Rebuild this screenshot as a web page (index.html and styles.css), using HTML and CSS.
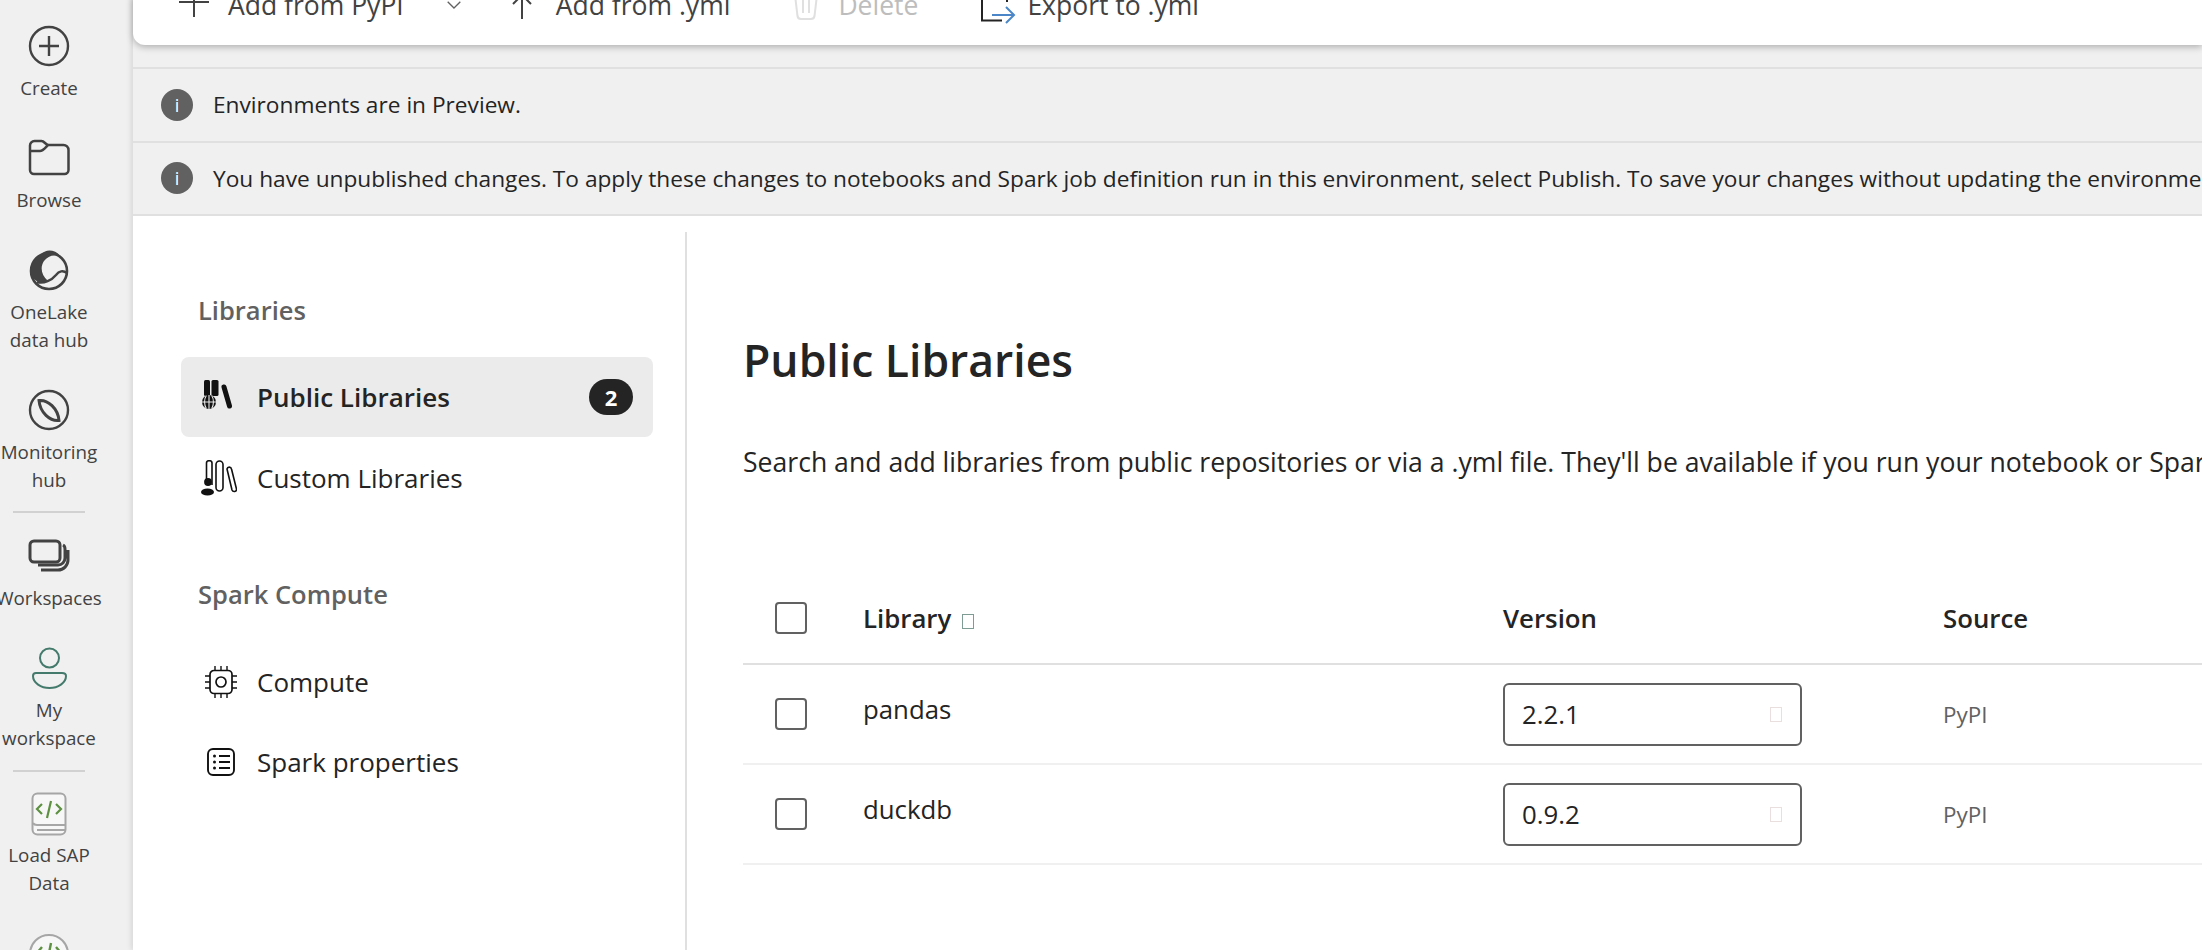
FILE: index.html
```html
<!DOCTYPE html>
<html lang="en">
<head>
<meta charset="utf-8">
<title>Environment - Public Libraries</title>
<link rel="stylesheet" href="styles.css">
</head>
<body>
<div class="app">
  <nav class="rail">
    <div class="rail-item">
      <svg class="rail-icon" viewBox="0 0 42 42"><circle cx="21" cy="21" r="19" fill="none" stroke="#424242" stroke-width="2.4"/><path d="M21 11v20M11 21h20" stroke="#424242" stroke-width="2.4" fill="none"/></svg>
      <span>Create</span>
    </div>
    <div class="rail-item">
      <svg class="rail-icon" viewBox="0 0 42 42"><path d="M2 8.500a4.500 4.500 0 0 1 4.500-4.500h7c3 0 4 4 7 4h15a5 5 0 0 1 5 5v20a4 4 0 0 1-4 4H6a4 4 0 0 1-4-4z M2 14h10c3 0 5-3 8-6" fill="none" stroke="#424242" stroke-width="2.500"/></svg>
      <span>Browse</span>
    </div>
    <div class="rail-item">
      <svg class="rail-icon" viewBox="0 0 42 42"><circle cx="21" cy="22" r="18" fill="none" stroke="#424242" stroke-width="2.600"/><path d="M14 5C17 0 28 0 33 8 26 5 20 7 16 12 12 18 13 26 20 32 10 36 3 30 3 22 3 14 8 8 14 5z" fill="#424242"/><path d="M9 33c7 2 15-2 19-7 3-4 7-5 11-2" fill="none" stroke="#424242" stroke-width="2.400"/></svg>
      <span>OneLake<br>data hub</span>
    </div>
    <div class="rail-item">
      <svg class="rail-icon" viewBox="0 0 42 42"><circle cx="21" cy="21" r="19" fill="none" stroke="#424242" stroke-width="2.400"/><path d="M11 11.500c9-1 19 8 20 20-9 1-19-8-20-20z" fill="none" stroke="#424242" stroke-width="3"/></svg>
      <span>Monitoring<br>hub</span>
    </div>
    <div class="rail-sep rail-sep-a"></div>
    <div class="rail-item rail-spaces">
      <svg class="rail-icon rail-icon-wide" viewBox="0 0 42 34"><rect x="2" y="2" width="30" height="21" rx="4" fill="none" stroke="#424242" stroke-width="3"/><path d="M35 6c2 1 2 2 2 4v9a7 7 0 0 1-7 7H10M40 11v10a10 10 0 0 1-10 10H13" fill="none" stroke="#424242" stroke-width="3"/></svg>
      <span>Workspaces</span>
    </div>
    <div class="rail-item">
      <svg class="rail-icon" viewBox="0 0 42 42"><circle cx="21.500" cy="11" r="9.500" fill="none" stroke="#447a6b" stroke-width="2"/><path d="M8 26h26c3 0 4 1 4 3 0 7-8 12-16.500 12S5 36 5 29c0-2 1-3 3-3z" fill="none" stroke="#447a6b" stroke-width="2"/></svg>
      <span>My<br>workspace</span>
    </div>
    <div class="rail-sep rail-sep-b"></div>
    <div class="rail-item rail-sap">
      <svg class="rail-icon rail-icon-book" viewBox="0 0 36 44"><rect x="1.500" y="1.500" width="33" height="41" rx="5" fill="#f7f7f7" stroke="#a6a6a6" stroke-width="2"/><path d="M2 31c1 2 2 2 4 2h28M6 38h28" fill="none" stroke="#a6a6a6" stroke-width="2"/><path d="M11 12l-5 5 5 5M25 12l5 5-5 5M20 9l-4 17" fill="none" stroke="#5d9141" stroke-width="2.200"/></svg>
      <span>Load SAP<br>Data</span>
    </div>
    <svg class="rail-icon rail-last" viewBox="0 0 42 42"><circle cx="21" cy="21" r="19" fill="#f7f7f7" stroke="#a6a6a6" stroke-width="2"/><path d="M14 14l-5 6 5 6M28 14l5 6-5 6M23 10l-4 20" fill="none" stroke="#5d9141" stroke-width="2.400"/></svg>
  </nav>

  <main class="content">
    <div class="toolbar">
      <svg class="tool-icon ti-add" viewBox="0 0 30 32"><path d="M15 0v28M0 13h30" stroke="#424242" stroke-width="2" fill="none"/></svg>
      <span class="tool-text tt-add">Add from PyPI</span>
      <svg class="tool-chevron" viewBox="0 0 14 8"><path d="M.7.7L7 7 13.300.7" stroke="#616161" stroke-width="1.300" fill="none"/></svg>
      <svg class="tool-icon ti-yml" viewBox="0 0 32 32"><path d="M16 30V6M7 15l9-9 9 9" stroke="#424242" stroke-width="2" fill="none"/></svg>
      <span class="tool-text tt-yml">Add from .yml</span>
      <svg class="tool-icon ti-del" viewBox="0 0 24 32"><path d="M1 6l2.500 21c.3 2 1.500 3 3.500 3h10c2 0 3.200-1 3.500-3L23 6M9 8v16M15 8v16" stroke="#e0e0e0" stroke-width="2" fill="none"/></svg>
      <span class="tool-text tool-text-off tt-del">Delete</span>
      <svg class="tool-icon ti-exp" viewBox="0 0 34 32"><path d="M2 0v31.500h20M27 0v13" stroke="#242424" stroke-width="2" fill="none"/><path d="M12 26h21M26 18l8 8-8 8" stroke="#4a86c8" stroke-width="2" fill="none"/></svg>
      <span class="tool-text tt-exp">Export to .yml</span>
    </div>

    <section class="panel">
      <div class="banner">
        <span class="info">i</span>
        <span>Environments are in Preview.</span>
      </div>
      <div class="banner">
        <span class="info">i</span>
        <span>You have unpublished changes. To apply these changes to notebooks and Spark job definition run in this environment, select Publish. To save your changes without updating the environment, select Save.</span>
      </div>

      <div class="split">
        <aside class="side">
          <h3 class="side-title">Libraries</h3>
          <div class="side-item side-item-active">
            <svg class="side-icon" viewBox="0 0 36 36"><rect x="3" y="1" width="6" height="16" rx="1.500" fill="#111"/><rect x="10.500" y="1" width="7" height="16" rx="1.500" fill="#111"/><path d="M23 8l5.500 19" stroke="#111" stroke-width="5" stroke-linecap="round"/><circle cx="8" cy="23" r="7" fill="#111"/><path d="M1 23h14M8 16v14M5.300 16.500c-2.300 3.500-2.300 9.500 0 13M10.700 16.500c2.300 3.500 2.300 9.500 0 13" fill="none" stroke="#ebebeb" stroke-width="1.100"/></svg>
            <span class="side-label">Public Libraries</span>
            <span class="count">2</span>
          </div>
          <div class="side-item side-item-next">
            <svg class="side-icon" viewBox="0 0 36 36"><path d="M5.500 20V3c0-3 5.500-3 5.500 0v22" fill="none" stroke="#111" stroke-width="1.600"/><rect x="15" y="1" width="7" height="30" rx="3.500" fill="none" stroke="#111" stroke-width="1.600"/><path d="M26 9c.5-2.500 4-2.500 4.500 0l5 20c.4 2.800-3.500 3.500-4.500 1z" fill="none" stroke="#111" stroke-width="1.600"/><circle cx="7" cy="22" r="3.900" fill="#111"/><ellipse cx="6.500" cy="32" rx="6.500" ry="3.600" fill="#111"/></svg>
            <span class="side-label">Custom Libraries</span>
          </div>
          <h3 class="side-title side-title-spark">Spark Compute</h3>
          <div class="side-item">
            <svg class="side-icon" viewBox="0 0 36 36"><rect x="9" y="6.500" width="22" height="23" rx="4" fill="none" stroke="#111" stroke-width="1.700"/><circle cx="20" cy="18" r="5" fill="none" stroke="#111" stroke-width="1.700"/><path d="M14 2v4M20 2v4M26 2v4M14 30v4M20 30v4M26 30v4M4 12h5M4 18h5M4 24h5M31 12h5M31 18h5M31 24h5" stroke="#111" stroke-width="1.400"/></svg>
            <span class="side-label">Compute</span>
          </div>
          <div class="side-item">
            <svg class="side-icon" viewBox="0 0 36 36"><rect x="7" y="5" width="26" height="26" rx="5" fill="none" stroke="#111" stroke-width="1.900"/><path d="M18 12h11M18 18h11M18 24h11" stroke="#111" stroke-width="1.900"/><circle cx="13.500" cy="12" r="1.500" fill="#111"/><circle cx="13.500" cy="18" r="1.500" fill="#111"/><circle cx="13.500" cy="24" r="1.500" fill="#111"/></svg>
            <span class="side-label">Spark properties</span>
          </div>
        </aside>

        <article class="detail">
          <h1 class="detail-title">Public Libraries</h1>
          <p class="detail-desc">Search and add libraries from public repositories or via a .yml file. They'll be available if you run your notebook or Spark job definition in this environment.</p>
          <div class="table">
            <div class="row row-head">
              <span class="check"></span>
              <span class="cell-lib">Library <i class="tofu tofu-sort"></i></span>
              <span class="cell-ver">Version</span>
              <span class="cell-src">Source</span>
            </div>
            <div class="row">
              <span class="check"></span>
              <span class="cell-lib cell-name">pandas</span>
              <span class="cell-ver"><span class="select">2.2.1<i class="tofu"></i></span></span>
              <span class="cell-src cell-src-val">PyPI</span>
            </div>
            <div class="row">
              <span class="check"></span>
              <span class="cell-lib cell-name">duckdb</span>
              <span class="cell-ver"><span class="select">0.9.2<i class="tofu"></i></span></span>
              <span class="cell-src cell-src-val">PyPI</span>
            </div>
          </div>
        </article>
      </div>
    </section>
  </main>
</div>
</body>
</html>
```

FILE: styles.css
```css
* { box-sizing: border-box; }
html, body { margin: 0; height: 100%; overflow: hidden; }
body {
  background: #f0f0f0;
  color: #242424;
  font-family: "Open Sans", "Noto Sans", "Liberation Sans", sans-serif;
}
.app { display: flex; width: 2202px; height: 950px; overflow: hidden; }

/* left rail */
.rail {
  width: 132px;
  flex: none;
  padding: 24.500px 34px 0 0;
  overflow: hidden;
}
.rail-item {
  width: 98px;
  margin-bottom: 35px;
  display: flex;
  flex-direction: column;
  align-items: center;
  text-align: center;
  font-size: 18.800px;
  line-height: 28px;
  color: #424242;
  white-space: nowrap;
}
.rail-icon { width: 42px; height: 42px; flex: none; margin-bottom: 7px; display: block; }
.rail-icon-wide { height: 34px; margin-bottom: 11px; }
.rail-icon-book { width: 36px; height: 44px; margin-bottom: 5px; }
.rail-sep { width: 72px; height: 2px; background: #d1d1d1; margin-left: 13px; }
.rail-sep-a { margin-top: -18px; }
.rail-sep-b { margin-top: -17px; }
.rail-spaces { margin-top: 26px; }
.rail-sap { margin-top: 20px; margin-bottom: 36px; }
.rail-last { margin: 0 0 0 28px; }

/* main column */
.content {
  flex: 1;
  min-width: 0;
  margin-left: 1px;
  position: relative;
  background: #f0f0f0;
  box-shadow: -2px 0 5px rgba(0,0,0,.1);
}
.toolbar {
  height: 90px;
  margin-top: -45px;
  background: #fff;
  border-radius: 0 0 0 12px;
  box-shadow: 0 2px 7px rgba(0,0,0,.28);
  display: flex;
  align-items: center;
  padding: 10px 0 0 46px;
  font-size: 26.500px;
  line-height: 28px;
  color: #424242;
  white-space: nowrap;
}
.tool-icon { height: 32px; flex: none; display: block; overflow: visible; }
.ti-add { width: 30px; }
.tt-add { margin-left: 19px; }
.tool-chevron { width: 14px; height: 8px; margin-left: 43px; flex: none; }
.ti-yml { width: 32px; margin-left: 45px; }
.tt-yml { margin-left: 18px; }
.ti-del { width: 24px; margin-left: 64px; }
.tt-del { margin-left: 20px; }
.tool-text-off { color: #bdbdbd; }
.ti-exp { width: 34px; margin-left: 62px; }
.tt-exp { margin-left: 13px; }

.panel {
  margin-top: 22px;
  background: #fff;
  height: 890px;
  border-top: 2px solid #e0e0e0;
}
.banner {
  height: 73.500px;
  background: #f0f0f0;
  border-bottom: 2px solid #e0e0e0;
  display: flex;
  align-items: center;
  padding-left: 28px;
  font-size: 22.700px;
  color: #242424;
  white-space: nowrap;
  overflow: hidden;
}
.info {
  width: 32px;
  height: 32px;
  flex: none;
  border-radius: 50%;
  background: #616161;
  color: #fff;
  display: flex;
  align-items: center;
  justify-content: center;
  font-size: 18px;
  margin-right: 20px;
}

.split { display: flex; padding-top: 16px; }
.side {
  width: 554px;
  flex: none;
  height: 800px;
  border-right: 2px solid #e0e0e0;
  padding: 64px 32px 0 48px;
}
.side-title {
  margin: 0;
  font-size: 25.500px;
  line-height: 28px;
  font-weight: 600;
  color: #616161;
  padding-left: 17px;
}
.side-title-spark { margin-top: 62px; margin-bottom: 34px; }
.side-item {
  height: 80px;
  display: flex;
  align-items: center;
  font-size: 26px;
  color: #242424;
  padding: 0 20px;
  border-radius: 8px;
}
.side-item-active { margin-top: 33px; background: #ebebeb; font-weight: 600; }
.side-item-next { margin-top: 1px; }
.side-icon { width: 36px; height: 36px; flex: none; margin-right: 20px; }
.side-label { flex: 1; white-space: nowrap; }
.count {
  width: 44px;
  height: 36px;
  border-radius: 18px;
  background: #242424;
  color: #fff;
  font-size: 22px;
  font-weight: 700;
  display: flex;
  align-items: center;
  justify-content: center;
}

.detail { flex: 1; min-width: 0; padding: 102px 0 0 56px; overflow: hidden; }
.detail-title { margin: 0; font-size: 44.500px; line-height: 52px; font-weight: 600; color: #242424; }
.detail-desc { margin: 61px 0 0; font-size: 26.600px; line-height: 30px; color: #242424; white-space: nowrap; }
.table { margin-top: 95px; }
.row {
  height: 100px;
  display: flex;
  align-items: center;
  border-bottom: 2px solid #f0f0f0;
  font-size: 25.800px;
}
.row-head { height: 93px; border-bottom-color: #e0e0e0; font-weight: 600; }
.check {
  width: 32px;
  height: 32px;
  flex: none;
  border: 2px solid #616161;
  border-radius: 4px;
  margin-left: 32px;
}
.cell-lib { width: 640px; flex: none; margin-left: 56px; }
.cell-name { padding-bottom: 10px; }
.cell-ver { width: 440px; flex: none; }
.cell-src { flex: none; }
.cell-src-val { font-size: 22.400px; color: #616161; }
.select {
  width: 299px;
  height: 63px;
  border: 2px solid #616161;
  border-radius: 6px;
  display: flex;
  align-items: center;
  justify-content: space-between;
  padding: 0 18px 0 17px;
  color: #242424;
  font-weight: 400;
}
.tofu {
  display: inline-block;
  width: 12px;
  height: 15px;
  border: 1.500px solid #eadfdf;
}
.tofu-sort { margin-left: 4px; border-color: #7f9c94; vertical-align: -1px; }
```
